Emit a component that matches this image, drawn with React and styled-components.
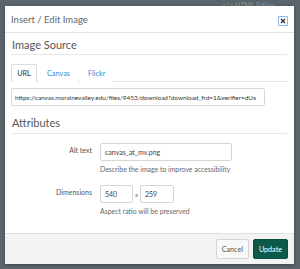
import styled, { createGlobalStyle } from "styled-components"

const GlobalStyle = createGlobalStyle`
  html, body {
    margin: 0;
    padding: 0;
    background: #59646b;
    font-family: Lato, "Liberation Sans", sans-serif;
  }
  * { box-sizing: border-box; }
`

function App() {
  return (
    <>
      <GlobalStyle />
      <Page>
        <BehindText>&lt;/&gt; HTML Editor</BehindText>
        <Dialog>
          <Header>
            <Title>Insert / Edit Image</Title>
            <CloseButton aria-label="Close">
              <svg width="6" height="6" viewBox="0 0 6 6">
                <path d="M1 1 L5 5 M5 1 L1 5" stroke="#333" strokeWidth="1.4" />
              </svg>
            </CloseButton>
          </Header>
          <Body>
            <SectionTitle>Image Source</SectionTitle>
            <Tabs>
              <Tab $active>URL</Tab>
              <Tab>Canvas</Tab>
              <Tab>Flickr</Tab>
            </Tabs>
            <UrlInput>https://canvas.morainevalley.edu/files/9453/download?download_frd=1&amp;verifier=dUx</UrlInput>
            <SectionTitle $attrs>Attributes</SectionTitle>
            <FormRow>
              <Label>Alt text</Label>
              <Field>
                <TextInput $width={132}>canvas_at_mv.png</TextInput>
                <Help>Describe the image to improve accessibility</Help>
              </Field>
            </FormRow>
            <FormRow $dims>
              <Label>Dimensions</Label>
              <Field>
                <DimRow>
                  <TextInput $width={33}>540</TextInput>
                  <Times>x</Times>
                  <TextInput $width={34}>259</TextInput>
                </DimRow>
                <Help>Aspect ratio will be preserved</Help>
              </Field>
            </FormRow>
          </Body>
          <Footer>
            <Button>Cancel</Button>
            <Button $primary>Update</Button>
          </Footer>
        </Dialog>
      </Page>
    </>
  )
}

const Page = styled.div`
  position: relative;
  width: 300px;
  height: 269px;
  overflow: hidden;
  background: #59646b;
`

const BehindText = styled.div`
  position: absolute;
  top: 1px;
  left: 222px;
  font-size: 7px;
  color: #8a949a;
`

const Dialog = styled.div`
  position: absolute;
  top: 6px;
  left: 5px;
  width: 289px;
  height: 258px;
  background: #fff;
  display: flex;
  flex-direction: column;
  box-shadow: 0 1px 3px rgba(0, 0, 0, 0.3);
`

const Header = styled.div`
  height: 27px;
  display: flex;
  align-items: center;
  justify-content: space-between;
  padding: 0 6px 0 6px;
  border-bottom: 1px solid #e2e2e2;
`

const Title = styled.div`
  font-size: 9.5px;
  color: #666;
  margin-top: 1px;
`

const CloseButton = styled.button`
  width: 10px;
  height: 10px;
  padding: 0;
  display: flex;
  align-items: center;
  justify-content: center;
  background: #fff;
  border: 1px solid #86b7f0;
  border-radius: 1px;
  margin-top: 3px;
`

const Body = styled.div`
  flex: 1;
  padding: 4px 7px 0 6px;
`

const SectionTitle = styled.div`
  font-size: 11px;
  color: #555;
  padding: ${p => (p.$attrs ? "10px 1px 3px" : "1px 1px 2px")};
  border-bottom: 1px solid #e8e8e8;
  line-height: 14px;
`

const Tabs = styled.div`
  display: flex;
  gap: 2px;
  margin-top: 9px;
  height: 18px;
  border-bottom: 1px solid #e3e3e3;
`

const Tab = styled.div`
  font-size: 7.3px;
  height: 18px;
  display: flex;
  align-items: center;
  justify-content: center;
  padding: 0 7px;
  color: ${p => (p.$active ? "#333" : "#2a8fd6")};
  background: #fff;
  border: 1px solid ${p => (p.$active ? "#dcdcdc" : "transparent")};
  border-bottom: none;
  border-radius: 2px 2px 0 0;
  margin-bottom: -1px;
  width: ${p => (p.$active ? "26px" : "auto")};
`

const UrlInput = styled.div`
  margin-top: 6px;
  width: 254px;
  height: 18px;
  border: 1px solid #d8d8d8;
  border-radius: 2px;
  font-size: 6.4px;
  color: #333;
  display: flex;
  align-items: center;
  padding: 0 3px;
  white-space: nowrap;
  overflow: hidden;
`

const FormRow = styled.div`
  display: flex;
  margin-top: ${p => (p.$dims ? "11px" : "9px")};
`

const Label = styled.div`
  width: 81px;
  text-align: right;
  font-size: 7px;
  color: #555;
  padding-top: 3px;
  margin-right: 8px;
`

const Field = styled.div`
  display: flex;
  flex-direction: column;
`

const TextInput = styled.div`
  width: ${p => p.$width}px;
  height: 18px;
  border: 1px solid #d6d6d6;
  border-radius: 2px;
  font-size: 7px;
  color: #444;
  display: flex;
  align-items: center;
  padding: 0 4px;
`

const DimRow = styled.div`
  display: flex;
  align-items: center;
`

const Times = styled.span`
  font-size: 6px;
  color: #666;
  width: 7px;
  text-align: center;
`

const Help = styled.div`
  font-size: 6.9px;
  color: #666;
  margin-top: 4px;
  line-height: 9px;
`

const Footer = styled.div`
  height: 31px;
  background: #f3f3f3;
  border-top: 1px solid #dedede;
  display: flex;
  align-items: center;
  justify-content: flex-end;
  gap: 4px;
  padding: 0 6px 0 0;
`

const Button = styled.button`
  font-family: Lato, "Liberation Sans", sans-serif;
  font-size: 7.2px;
  height: 20px;
  padding: 0 5px;
  min-width: ${p => (p.$primary ? "34px" : "32px")};
  border-radius: 2px;
  border: 1px solid ${p => (p.$primary ? "#0b4d3d" : "#d4d4d4")};
  background: ${p => (p.$primary ? "#0d5947" : "#f8f8f8")};
  color: ${p => (p.$primary ? "#fff" : "#555")};
`

export default App
